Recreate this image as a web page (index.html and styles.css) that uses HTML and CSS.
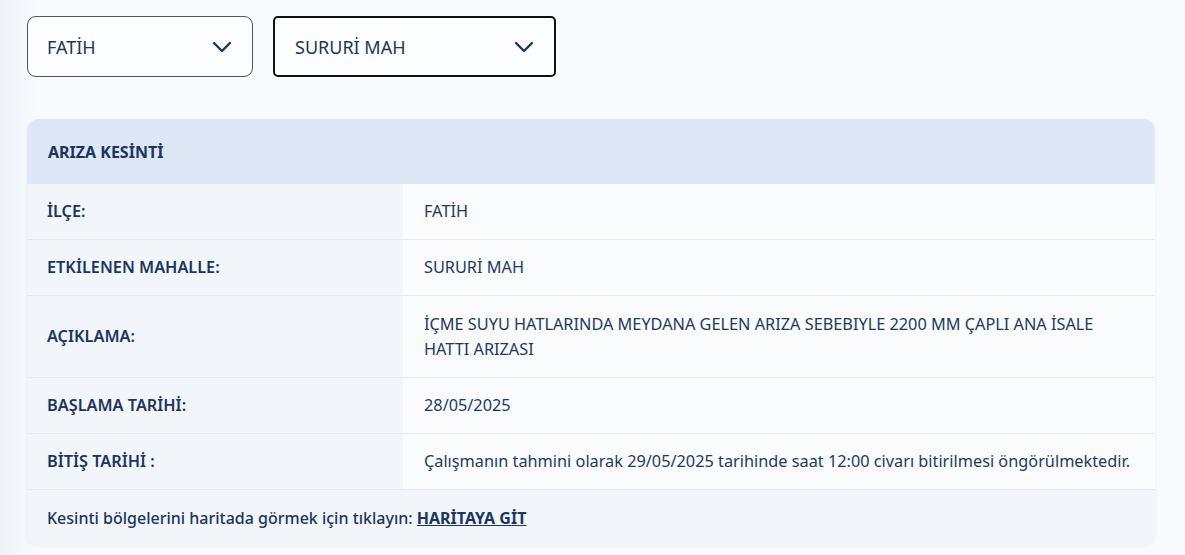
FILE: index.html
```html
<!DOCTYPE html>
<html lang="tr">
<head>
  <meta charset="UTF-8">
  <meta name="viewport" content="width=device-width, initial-scale=1.0">
  <title>Arıza Kesinti</title>
  <link rel="stylesheet" href="styles.css">
</head>
<body>
  <main class="page">
    <section class="filters">
      <div class="select select-district">
        <span>FATİH</span>
        <svg class="chevron" viewBox="0 0 20 12" width="20" height="12"><path d="M2 2l8 8 8-8" fill="none" stroke="#1b3459" stroke-width="2.4" stroke-linecap="round" stroke-linejoin="round"/></svg>
      </div>
      <div class="select select-hood">
        <span>SURURİ MAH</span>
        <svg class="chevron" viewBox="0 0 20 12" width="20" height="12"><path d="M2 2l8 8 8-8" fill="none" stroke="#1b3459" stroke-width="2.4" stroke-linecap="round" stroke-linejoin="round"/></svg>
      </div>
    </section>

    <section class="outage-card">
      <div class="card-head">ARIZA KESİNTİ</div>
      <div class="row">
        <div class="label">İLÇE:</div>
        <div class="value">FATİH</div>
      </div>
      <div class="row">
        <div class="label">ETKİLENEN MAHALLE:</div>
        <div class="value">SURURİ MAH</div>
      </div>
      <div class="row row-tall">
        <div class="label">AÇIKLAMA:</div>
        <div class="value">İÇME SUYU HATLARINDA MEYDANA GELEN ARIZA SEBEBIYLE 2200 MM ÇAPLI ANA İSALE HATTI ARIZASI</div>
      </div>
      <div class="row">
        <div class="label">BAŞLAMA TARİHİ:</div>
        <div class="value">28/05/2025</div>
      </div>
      <div class="row">
        <div class="label">BİTİŞ TARİHİ :</div>
        <div class="value">Çalışmanın tahmini olarak 29/05/2025 tarihinde saat 12:00 civarı bitirilmesi öngörülmektedir.</div>
      </div>
      <div class="card-foot">
        <p>Kesinti bölgelerini haritada görmek için tıklayın: <a href="#">HARİTAYA GİT</a></p>
      </div>
    </section>
  </main>
</body>
</html>
```

FILE: styles.css
```css
body {
  margin: 0;
  padding: 0;
  font-family: "Noto Sans", "Open Sans", sans-serif;
  color: #1b3459;
  background: linear-gradient(to right, #eff2f7 0, #f4f7fb 20px, #f8fafd 40px);
}

.page {
  padding: 16px 30px 10px 27px;
}

.filters {
  display: flex;
  gap: 20px;
  margin-bottom: 42px;
}

.select {
  height: 61px;
  box-sizing: border-box;
  display: flex;
  align-items: center;
  justify-content: space-between;
  background-color: #fcfdfe;
  font-size: 18px;
  color: #233650;
}

.select-district {
  width: 226px;
  border: 1px solid #4a5566;
  border-radius: 9px;
  padding: 0 20px 0 19px;
}

.select-hood {
  width: 283px;
  border: 2px solid #111;
  border-radius: 5px;
  padding: 0 20px 0 20px;
}

.outage-card {
  border-radius: 12px;
  overflow: hidden;
  background-color: #f9fbfd;
  box-shadow: 0 1px 4px rgba(30, 60, 110, 0.06);
}

.card-head {
  background-color: #dde7f5;
  height: 65px;
  display: flex;
  align-items: center;
  padding-left: 21px;
  font-weight: bold;
  font-size: 16px;
  color: #1b365d;
}

.row {
  display: grid;
  grid-template-columns: 376px 1fr;
  border-bottom: 1px solid #e6eaf0;
  min-height: 55px;
}

.row-tall {
  min-height: 81px;
}

.label,
.value {
  display: flex;
  align-items: center;
  font-size: 16.3px;
  line-height: 25px;
}

.label {
  background-color: #f2f5f9;
  padding-left: 20px;
  font-weight: 600;
  color: #1b365d;
}

.value {
  background-color: #f9fbfd;
  padding: 0 16px 0 21px;
  color: #1d3a60;
}

.card-foot {
  background-color: #f2f5f9;
  height: 55px;
  display: flex;
  align-items: center;
  padding-left: 20px;
  font-size: 16px;
  font-weight: 500;
  color: #1b365d;
}

.card-foot p {
  margin: 0;
}

.card-foot a {
  color: #1b365d;
  font-weight: bold;
  text-decoration: underline;
}
```
